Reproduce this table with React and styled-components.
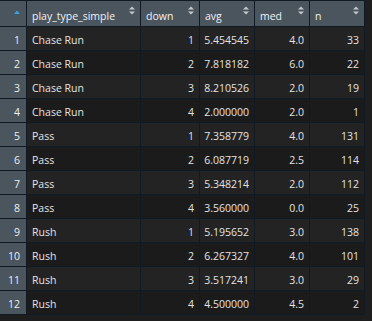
import styled, { createGlobalStyle } from 'styled-components'

const rows = [
  [1, 'Chase Run', 1, '5.454545', '4.0', 33],
  [2, 'Chase Run', 2, '7.818182', '6.0', 22],
  [3, 'Chase Run', 3, '8.210526', '2.0', 19],
  [4, 'Chase Run', 4, '2.000000', '2.0', 1],
  [5, 'Pass', 1, '7.358779', '4.0', 131],
  [6, 'Pass', 2, '6.087719', '2.5', 114],
  [7, 'Pass', 3, '5.348214', '2.0', 112],
  [8, 'Pass', 4, '3.560000', '0.0', 25],
  [9, 'Rush', 1, '5.195652', '3.0', 138],
  [10, 'Rush', 2, '6.267327', '4.0', 101],
  [11, 'Rush', 3, '3.517241', '3.0', 29],
  [12, 'Rush', 4, '4.500000', '4.5', 2]
]

const columns = ['play_type_simple', 'down', 'avg', 'med', 'n']

const GlobalStyle = createGlobalStyle`
  html, body {
    margin: 0;
    padding: 0;
    background: #1e1e1e;
  }
  body {
    font-family: "Open Sans", "Noto Sans", sans-serif;
  }
`

const Page = styled.div`
  width: 372px;
  height: 321px;
  background: #1e1e1e;
  overflow: hidden;
`

const Grid = styled.div`
  display: grid;
  width: max-content;
  grid-template-columns: 26px 113px 58px 54px 54px 54px;
  grid-auto-rows: 23px;
  grid-template-rows: 25px;
  gap: 1px;
  padding: 1px 1px 1px 0;
  background: #0f1a24;
`

const HeadCell = styled.div`
  position: relative;
  background: #4a555e;
  color: #f0f2f4;
  font-size: 10.5px;
  line-height: 14px;
  padding: 4px 5px 0;
  display: flex;
  align-items: center;
  white-space: nowrap;
`

const SortIcon = styled.svg`
  position: absolute;
  top: 5px;
  right: 5px;
`

const RowNum = styled.div`
  background: #4a555e;
  color: #eef0f2;
  font-size: 10.5px;
  line-height: 14px;
  padding: 3px 6px 0 0;
  display: flex;
  align-items: center;
  justify-content: flex-end;
`

const Cell = styled.div`
  background: ${p => (p.$odd ? '#232323' : '#1b1b1b')};
  color: #e4e4e4;
  font-size: 10.5px;
  line-height: 14px;
  padding: 3px 5px 0;
  display: flex;
  align-items: center;
  justify-content: ${p => (p.$num ? 'flex-end' : 'flex-start')};
  white-space: nowrap;
`

const SortBoth = () => (
  <SortIcon width='6' height='9' viewBox='0 0 6 9'>
    <polygon points='0,3.5 3,0.5 6,3.5' fill='#c4c9ce' />
    <polygon points='0,5.5 3,8.5 6,5.5' fill='#c4c9ce' />
  </SortIcon>
)

const SortUp = styled.svg`
  position: absolute;
  top: 9px;
  right: 6px;
`

export default function App () {
  return (
    <Page>
      <GlobalStyle />
      <Grid>
        <HeadCell>
          <SortUp width='6' height='4' viewBox='0 0 6 4'>
            <polygon points='0,4 3,0.5 6,4' fill='#3c9ee0' />
          </SortUp>
        </HeadCell>
        {columns.map(c => (
          <HeadCell key={c}>
            {c}
            <SortBoth />
          </HeadCell>
        ))}
        {rows.map(([i, type, down, avg, med, n]) => {
          const odd = i % 2 === 1
          return [
            <RowNum key={i + '-i'}>{i}</RowNum>,
            <Cell key={i + '-t'} $odd={odd}>{type}</Cell>,
            <Cell key={i + '-d'} $odd={odd} $num>{down}</Cell>,
            <Cell key={i + '-a'} $odd={odd} $num>{avg}</Cell>,
            <Cell key={i + '-m'} $odd={odd} $num>{med}</Cell>,
            <Cell key={i + '-n'} $odd={odd} $num>{n}</Cell>
          ]
        })}
      </Grid>
    </Page>
  )
}
